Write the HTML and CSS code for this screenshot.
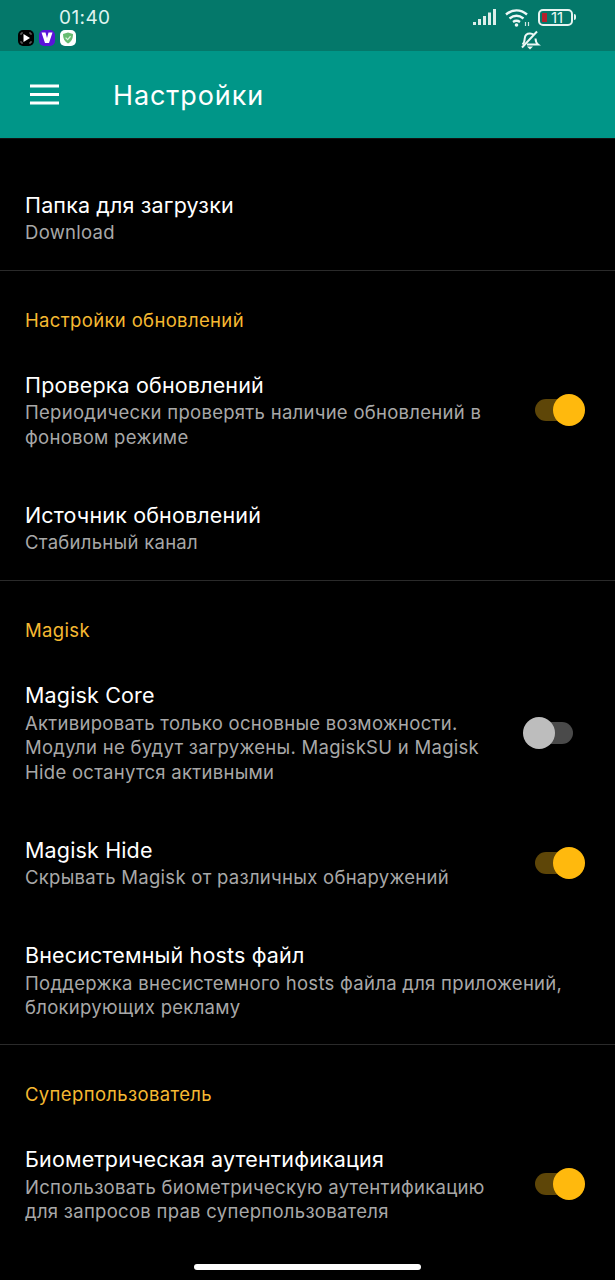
FILE: index.html
```html
<!DOCTYPE html>
<html lang="ru">
<head>
<meta charset="utf-8">
<title>Настройки</title>
<link rel="stylesheet" href="styles.css">
</head>
<body>
<div class="screen">
  <header class="statusbar">
    <div class="status-left">
      <div class="clock">01:40</div>
      <div class="notif-icons">
        <span class="notif notif-play"><svg viewBox="0 0 16 16" width="16" height="16"><path d="M3 5V3h2M11 3h2v2M13 11v2h-2M5 13H3v-2" fill="none" stroke="#777" stroke-width="1"/><path d="M5.500 4l6.500 4-6.500 4z" fill="#fff"/></svg></span>
        <span class="notif notif-v"><svg viewBox="0 0 16 16" width="16" height="16"><path d="M2.500 2.500h4L8 8l1.500-5.500h4L10 13H6z" fill="#fff"/></svg></span>
        <span class="notif notif-shield"><svg viewBox="0 0 16 16" width="16" height="16"><path d="M8 2.500l5 1.600c0 4.400-1.400 7.600-5 9.400-3.600-1.800-5-5-5-9.400z" fill="#68bc71"/><path d="M5.600 7.600l2 2 3-3.400" fill="none" stroke="#d9f0dc" stroke-width="1.300"/></svg></span>
      </div>
    </div>
    <div class="status-right">
      <svg class="ic-signal" viewBox="0 0 23 17" width="23" height="17"><g fill="#dceeea"><rect x="0" y="13" width="3" height="3"/><rect x="5" y="10" width="3" height="6"/><rect x="10" y="7" width="3" height="9"/><rect x="15" y="3.500" width="3" height="12.500"/><rect x="20" y="0" width="3" height="16"/></g></svg>
      <svg class="ic-wifi" viewBox="0 0 25 19" width="25" height="19"><g fill="none" stroke="#eef8f6" stroke-width="2.400"><path d="M1 6.500C7.500 1 15.500 1 22 6.500"/><path d="M4.500 10.500c4.500-3.500 9.500-3.500 14 0"/><path d="M8 14c2.500-1.700 4.500-1.700 7 0"/></g><circle cx="11.500" cy="17" r="1.800" fill="#eef8f6"/><path d="M20.500 14v4M23.500 14v4" stroke="#cfe8e3" stroke-width="1.200"/></svg>
      <div class="battery"><span class="battery-fill"></span><span class="battery-num">11</span></div>
      <span class="battery-tip"></span>
      <svg class="ic-mute" viewBox="0 0 22 20" width="22" height="20"><g fill="none" stroke="#eef8f6" stroke-width="2"><path d="M3.500 14.500c2-1.500 2-3.500 2.200-6C6 5 8.500 3.500 11 3.500c1.500 0 2.800.5 3.800 1.300M16.500 8.500c.2 2.800.5 4.500 2.500 6H8"/><path d="M3 17.500L18 1.500"/></g><path d="M8 16.500h6L11 19.500z" fill="#eef8f6"/></svg>
    </div>
  </header>
  <div class="appbar">
    <svg class="menu" viewBox="0 0 29 21" width="29" height="21"><path d="M0 2h29M0 10.500h29M0 19h29" stroke="#fff" stroke-width="3"/></svg>
    <h1 class="appbar-title">Настройки</h1>
  </div>
  <main class="content">
    <section class="group group-first">
      <div class="item">
        <div class="item-text">
          <div class="item-title">Папка для загрузки</div>
          <div class="item-sub">Download</div>
        </div>
      </div>
    </section>
    <section class="group group-updates">
      <div class="group-head">Настройки обновлений</div>
      <div class="item">
        <div class="item-text">
          <div class="item-title">Проверка обновлений</div>
          <div class="item-sub">Периодически проверять наличие обновлений в<br>фоновом режиме</div>
        </div>
        <div class="switch switch-on"></div>
      </div>
      <div class="item">
        <div class="item-text">
          <div class="item-title">Источник обновлений</div>
          <div class="item-sub">Стабильный канал</div>
        </div>
      </div>
    </section>
    <section class="group">
      <div class="group-head">Magisk</div>
      <div class="item">
        <div class="item-text">
          <div class="item-title">Magisk Core</div>
          <div class="item-sub">Активировать только основные возможности.<br>Модули не будут загружены. MagiskSU и Magisk<br>Hide останутся активными</div>
        </div>
        <div class="switch switch-off"></div>
      </div>
      <div class="item">
        <div class="item-text">
          <div class="item-title">Magisk Hide</div>
          <div class="item-sub">Скрывать Magisk от различных обнаружений</div>
        </div>
        <div class="switch switch-on"></div>
      </div>
      <div class="item">
        <div class="item-text">
          <div class="item-title">Внесистемный hosts файл</div>
          <div class="item-sub">Поддержка внесистемного hosts файла для приложений,<br>блокирующих рекламу</div>
        </div>
      </div>
    </section>
    <section class="group">
      <div class="group-head">Суперпользователь</div>
      <div class="item">
        <div class="item-text">
          <div class="item-title">Биометрическая аутентификация</div>
          <div class="item-sub">Использовать биометрическую аутентификацию<br>для запросов прав суперпользователя</div>
        </div>
        <div class="switch switch-on"></div>
      </div>
    </section>
  </main>
  <div class="home-bar"></div>
</div>
</body>
</html>
```
FILE: styles.css
```css
* { box-sizing: border-box; }
html, body { margin: 0; padding: 0; background: #000; }
body { font-family: "Inter", "Liberation Sans", sans-serif; }
.screen { position: relative; width: 615px; height: 1280px; overflow: hidden; background: #000; }

.statusbar { position: relative; height: 51px; background: #04786a; display: flex; justify-content: space-between; }
.status-left { padding: 6px 0 0 18px; }
.clock { margin-left: 41px; font-size: 19px; line-height: 23px; color: #dff3ef; letter-spacing: 0.4px; }
.notif-icons { display: flex; gap: 5px; margin-top: 1px; }
.notif { width: 16px; height: 16px; border-radius: 5px; display: block; overflow: hidden; }
.notif svg { display: block; }
.notif-play { background: #000; }
.notif-v { background: #5a14d8; }
.notif-shield { background: #fff; }

.ic-signal { position: absolute; left: 473px; top: 9px; }
.ic-wifi { position: absolute; left: 505px; top: 8px; }
.battery { position: absolute; left: 538px; top: 9px; width: 35px; height: 17px; border: 2px solid #e6f4f1; border-radius: 5px; }
.battery-fill { position: absolute; left: 2px; top: 2px; width: 5px; height: 9px; background: #b3202c; }
.battery-num { position: absolute; left: 11px; top: -2px; font-size: 15px; line-height: 17px; color: #eef8f6; }
.battery-tip { position: absolute; left: 574px; top: 14px; width: 2px; height: 6px; background: #e6f4f1; border-radius: 0 2px 2px 0; }
.ic-mute { position: absolute; left: 519px; top: 30px; }

.appbar { height: 87px; background: #009688; display: flex; align-items: center; padding-left: 30px; box-shadow: 0 1px 0 #111; }
.menu { display: block; }
.appbar-title { margin: 2px 0 0 54px; font-size: 27px; font-weight: 400; color: #fff; letter-spacing: 0.9px; line-height: 32px; }

.content { display: block; }
.group { border-bottom: 1px solid #2a2a2a; }
.group:last-child { border-bottom: 0; }
.group-first { padding-top: 27px; }
.group-head { padding: 35px 25px 11px; font-size: 18.500px; letter-spacing: 0.350px; line-height: 28px; color: #f6b932; }
.item { display: flex; align-items: center; padding: 26px 42px 25.500px 25px; }
.item:last-child { padding-bottom: 24.500px; }
.group-first .item:last-child { padding-bottom: 25px; }
.group-updates .item:last-child { padding-bottom: 25.500px; }
.item-text { flex: 1; min-width: 0; }
.item-title { font-size: 21.500px; letter-spacing: 0.150px; line-height: 28px; color: #fff; }
.item-sub { margin-top: 1.500px; font-size: 18.500px; letter-spacing: 0.280px; line-height: 24.500px; color: #a8a8a8; white-space: nowrap; }
.group-first .item-sub { margin-top: 1px; }

.switch { position: relative; flex: none; width: 38px; height: 22px; border-radius: 11px; margin-left: 20px; }
.switch::after { content: ""; position: absolute; top: -5px; width: 32px; height: 32px; border-radius: 50%; }
.switch-on { background: #5e4608; }
.switch-on::after { right: -12px; background: #ffb90d; }
.switch-off { background: #4a4a4a; }
.switch-off::after { left: -12px; background: #bdbdbd; }

.home-bar { position: absolute; left: 194px; top: 1264px; width: 227px; height: 6px; border-radius: 3px; background: #fff; }
```
